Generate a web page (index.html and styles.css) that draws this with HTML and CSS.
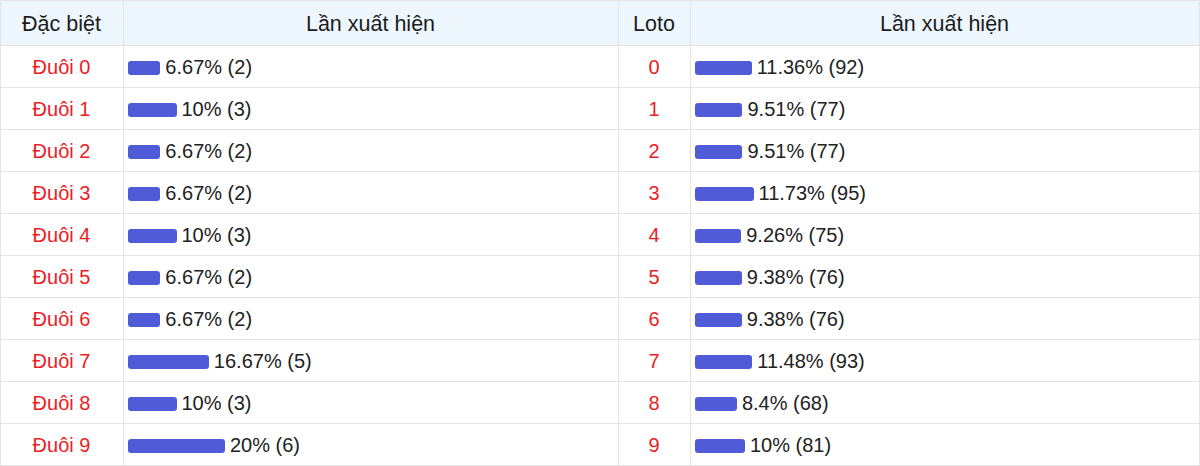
FILE: index.html
```html
<!DOCTYPE html>
<html lang="vi">
<head>
<meta charset="utf-8">
<link rel="stylesheet" href="styles.css">
</head>
<body>
<table class="stats">
  <colgroup>
    <col class="c1"><col class="c2"><col class="c3"><col class="c4">
  </colgroup>
  <thead>
    <tr><th>Đặc biệt</th><th>Lần xuất hiện</th><th>Loto</th><th>Lần xuất hiện</th></tr>
  </thead>
  <tbody>
    <tr><td class="num">Đuôi 0</td><td><span class="bar" style="width:6.67%"></span>6.67% (2)</td><td class="num">0</td><td><span class="bar" style="width:11.36%"></span>11.36% (92)</td></tr>
    <tr><td class="num">Đuôi 1</td><td><span class="bar" style="width:10%"></span>10% (3)</td><td class="num">1</td><td><span class="bar" style="width:9.51%"></span>9.51% (77)</td></tr>
    <tr><td class="num">Đuôi 2</td><td><span class="bar" style="width:6.67%"></span>6.67% (2)</td><td class="num">2</td><td><span class="bar" style="width:9.51%"></span>9.51% (77)</td></tr>
    <tr><td class="num">Đuôi 3</td><td><span class="bar" style="width:6.67%"></span>6.67% (2)</td><td class="num">3</td><td><span class="bar" style="width:11.73%"></span>11.73% (95)</td></tr>
    <tr><td class="num">Đuôi 4</td><td><span class="bar" style="width:10%"></span>10% (3)</td><td class="num">4</td><td><span class="bar" style="width:9.26%"></span>9.26% (75)</td></tr>
    <tr><td class="num">Đuôi 5</td><td><span class="bar" style="width:6.67%"></span>6.67% (2)</td><td class="num">5</td><td><span class="bar" style="width:9.38%"></span>9.38% (76)</td></tr>
    <tr><td class="num">Đuôi 6</td><td><span class="bar" style="width:6.67%"></span>6.67% (2)</td><td class="num">6</td><td><span class="bar" style="width:9.38%"></span>9.38% (76)</td></tr>
    <tr><td class="num">Đuôi 7</td><td><span class="bar" style="width:16.67%"></span>16.67% (5)</td><td class="num">7</td><td><span class="bar" style="width:11.48%"></span>11.48% (93)</td></tr>
    <tr><td class="num">Đuôi 8</td><td><span class="bar" style="width:10%"></span>10% (3)</td><td class="num">8</td><td><span class="bar" style="width:8.4%"></span>8.4% (68)</td></tr>
    <tr><td class="num">Đuôi 9</td><td><span class="bar" style="width:20%"></span>20% (6)</td><td class="num">9</td><td><span class="bar" style="width:10%"></span>10% (81)</td></tr>
  </tbody>
</table>
</body>
</html>
```
FILE: styles.css
```css
html, body {
  margin: 0;
  padding: 0;
  background: #fff;
}
body {
  font-family: "Liberation Sans", Arial, sans-serif;
  color: #222;
}
.stats {
  width: 1199px;
  border-collapse: collapse;
  table-layout: fixed;
}
.c1 { width: 123px; }
.c2 { width: 495px; }
.c3 { width: 72px; }
.c4 { width: 509px; }
.stats th, .stats td {
  border: 1px solid #e4e4e4;
  padding: 2px 5px 0 4px;
  white-space: nowrap;
}
.stats thead tr { height: 45px; }
.stats tbody tr { height: 42px; }
.stats th {
  background: #eef6fe;
  font-weight: normal;
  font-size: 21.5px;
  text-align: center;
  color: #1c1c1c;
}
.stats td {
  font-size: 20px;
  text-align: left;
}
.stats td.num {
  text-align: center;
  color: #ee1c25;
}
.bar {
  display: inline-block;
  height: 14px;
  background: #505bd8;
  border-radius: 3px;
  margin-right: 5px;
  vertical-align: -1px;
}
```
